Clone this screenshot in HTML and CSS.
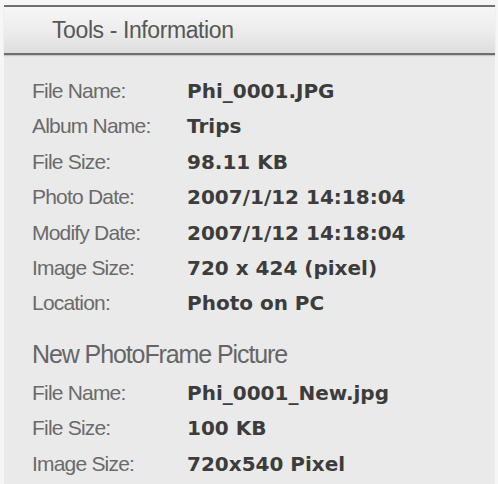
FILE: index.html
```html
<!DOCTYPE html>
<html lang="en">
<head>
<meta charset="utf-8">
<title>Tools - Information</title>
<link rel="stylesheet" href="styles.css">
</head>
<body>
<div class="panel">
  <div class="header">Tools - Information</div>
  <div class="content">
    <div class="row"><span class="label">File Name:</span><span class="value">Phi_0001.JPG</span></div>
    <div class="row"><span class="label">Album Name:</span><span class="value">Trips</span></div>
    <div class="row"><span class="label">File Size:</span><span class="value">98.11 KB</span></div>
    <div class="row"><span class="label">Photo Date:</span><span class="value">2007/1/12 14:18:04</span></div>
    <div class="row"><span class="label">Modify Date:</span><span class="value">2007/1/12 14:18:04</span></div>
    <div class="row"><span class="label">Image Size:</span><span class="value">720 x 424 (pixel)</span></div>
    <div class="row"><span class="label">Location:</span><span class="value">Photo on PC</span></div>
    <div class="section">New PhotoFrame Picture</div>
    <div class="row"><span class="label">File Name:</span><span class="value">Phi_0001_New.jpg</span></div>
    <div class="row"><span class="label">File Size:</span><span class="value">100 KB</span></div>
    <div class="row"><span class="label">Image Size:</span><span class="value">720x540 Pixel</span></div>
  </div>
</div>
</body>
</html>
```
FILE: styles.css
```css
html, body {
  margin: 0;
  padding: 0;
}
body {
  background: #f6f6f6;
  width: 498px;
  height: 484px;
  overflow: hidden;
}
.panel {
  margin: 5px 3px 0 4px;
  background: #eaeaea;
  height: 479px;
}
.header {
  height: 46px;
  line-height: 46px;
  border-top: 2px solid #6e6e6e;
  border-bottom: 2px solid #6e6e6e;
  background: linear-gradient(#f6f6f6, #ededed 50%, #dedede);
  box-shadow: 0 1px 1px rgba(0,0,0,0.15);
  font-family: "Liberation Sans", Arial, sans-serif;
  font-size: 23px;
  letter-spacing: -0.4px;
  color: #575757;
  padding-left: 48px;
}
.content {
  padding: 18px 0 0 28px;
}
.row {
  display: flex;
  align-items: baseline;
  height: 35.4px;
  line-height: 35.4px;
}
.label {
  width: 155px;
  flex: none;
  font-family: "Liberation Sans", Arial, sans-serif;
  font-size: 21px;
  letter-spacing: -0.8px;
  color: #6a6a6a;
}
.value {
  font-family: "DejaVu Sans", Verdana, sans-serif;
  font-weight: bold;
  font-size: 20px;
  color: #3c3c3c;
}
.section {
  margin-top: 13px;
  height: 41px;
  line-height: 41px;
  font-family: "Liberation Sans", Arial, sans-serif;
  font-size: 25px;
  letter-spacing: -1.1px;
  color: #666666;
}
```
